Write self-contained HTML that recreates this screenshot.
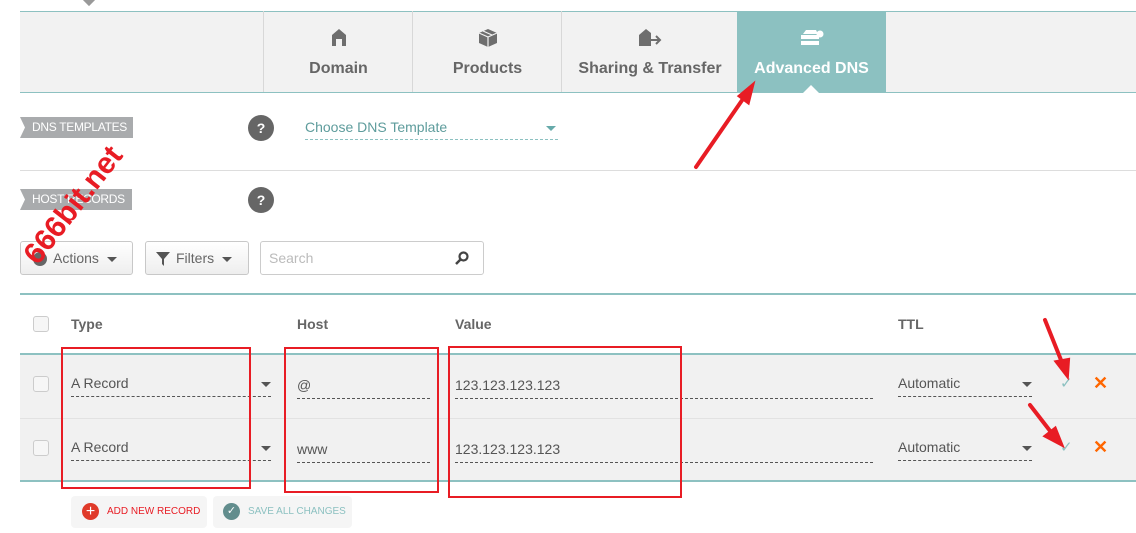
<!DOCTYPE html>
<html><head><meta charset="utf-8"><style>
*{margin:0;padding:0;box-sizing:border-box}
body{width:1136px;height:533px;overflow:hidden;background:#fff;font-family:"Liberation Sans",sans-serif;position:relative;color:#555}
.a{position:absolute}
.tabbar{left:20px;top:11px;width:1116px;height:82px;background:#f2f2f2;border-top:1px solid #8dc1c1;border-bottom:1px solid #8dc1c1}
.tab{position:absolute;top:11px;height:81px;border-left:1px solid #d8d8d8;text-align:center;font-weight:bold;font-size:16px;color:#666;white-space:nowrap}
.tab .lbl{position:absolute;top:49px;left:0;right:0}
.tab svg{position:absolute;top:17px;left:50%;transform:translateX(-50%)}
.label{background:#a9abad;color:#fff;font-size:12px;height:21px;line-height:21px;padding-left:12px;white-space:nowrap;overflow:hidden;letter-spacing:-0.3px;clip-path:polygon(0 0,100% 0,100% 100%,0 100%,5px 50%)}
.q{width:26px;height:26px;border-radius:50%;background:#666;color:#fff;font-weight:bold;font-size:14px;text-align:center;line-height:26px}
.btn{border:1px solid #c8c8c8;border-radius:3px;background:linear-gradient(#fff,#eee);height:34px;font-size:14px;color:#666;line-height:32px;white-space:nowrap}
.caret{display:inline-block;border-left:5px solid transparent;border-right:5px solid transparent;border-top:5px solid #555;vertical-align:middle}
.cb{width:16px;height:16px;border:1px solid #ccc;border-radius:3px;background:#f6f6f6}
.fld{border-bottom:1px dashed #555;font-size:14px;color:#555;height:22px;white-space:nowrap}
.th{font-size:14px;font-weight:bold;color:#666;top:316px}
.red{border:2px solid #e81c24}
</style></head><body>
<div class="a" style="left:84px;top:-6px;width:10px;height:10px;background:#999;transform:rotate(45deg)"></div>
<div class="a tabbar"></div>
<div class="tab" style="left:263px;width:150px"><svg width="16" height="18" viewBox="0 0 16 18"><path d="M1 7 8 1 15 7V18H11V11H5V18H1Z" fill="#6e6e6e"/></svg><div class="lbl">Domain</div></div>
<div class="tab" style="left:412px;width:150px"><svg width="20" height="20" viewBox="0 0 20 20"><path d="M10 1 19 5V15L10 19 1 15V5Z" fill="#6e6e6e"/><path d="M1 5 10 9 19 5M10 9V19M5 3 14 7" stroke="#f2f2f2" stroke-width="1.2" fill="none"/></svg><div class="lbl">Products</div></div>
<div class="tab" style="left:561px;width:177px"><svg width="24" height="18" viewBox="0 0 24 18"><path d="M1 7 8 1 13 5V18H1Z" fill="#6e6e6e"/><path d="M10 12H22M18 8 22 12 18 16" stroke="#6e6e6e" stroke-width="2" fill="none"/></svg><div class="lbl">Sharing &amp; Transfer</div></div>
<div class="tab" style="left:737px;width:149px;background:#8cc1c1;color:#fff;border:none"><svg width="24" height="18" viewBox="0 0 24 18"><path d="M3 6 6 2H16L18 6Z" fill="#fff"/><rect x="1" y="7" width="18" height="4" fill="#fff"/><rect x="1" y="13" width="18" height="4" fill="#fff"/><circle cx="20" cy="6" r="3.5" fill="#fff"/></svg><div class="lbl" style="color:#fff">Advanced DNS</div>
<div class="a" style="left:66px;top:74px;width:0;height:0;border-left:8px solid transparent;border-right:8px solid transparent;border-bottom:8px solid #fff"></div></div>

<div class="a label" style="left:20px;top:117px;width:113px">DNS TEMPLATES</div>
<div class="a q" style="left:248px;top:115px">?</div>
<div class="a" style="left:305px;top:119px;width:253px;height:21px;border-bottom:1px dashed #8cc1c1;font-size:14px;color:#5e9c9c">Choose DNS Template<span class="caret" style="position:absolute;right:2px;top:7px;border-top-color:#6aa"></span></div>
<div class="a" style="left:20px;top:170px;width:1116px;border-top:1px solid #ddd"></div>
<div class="a label" style="left:20px;top:189px;width:112px">HOST RECORDS</div>
<div class="a q" style="left:248px;top:187px">?</div>

<div class="a btn" style="left:20px;top:241px;width:113px;padding-left:12px"><span style="display:inline-block;width:14px;height:14px;border-radius:50%;background:#666;vertical-align:middle;margin-right:6px"></span>Actions&nbsp;&nbsp;<span class="caret"></span></div>
<div class="a btn" style="left:145px;top:241px;width:104px;padding-left:10px"><svg width="14" height="14" viewBox="0 0 14 14" style="vertical-align:middle;margin-right:6px"><path d="M0 0H14L8 7V14L6 12V7Z" fill="#555"/></svg>Filters&nbsp;&nbsp;<span class="caret"></span></div>
<div class="a" style="left:260px;top:241px;width:224px;height:34px;border:1px solid #ccc;border-radius:3px;font-size:14px;color:#bbb;line-height:32px;padding-left:8px">Search<svg width="14" height="14" viewBox="0 0 14 14" style="position:absolute;right:14px;top:9px"><circle cx="8.5" cy="5.5" r="4" stroke="#444" stroke-width="2.2" fill="none"/><path d="M6 8 1 13" stroke="#444" stroke-width="2.5"/></svg></div>
<div class="a" style="color:#e81c24;font-weight:bold;font-size:30px;transform:rotate(-52deg);transform-origin:left bottom;top:237px;left:44px;white-space:nowrap">666bit.net</div>

<div class="a" style="left:20px;top:293px;width:1116px;border-top:2px solid #8dc1c1"></div>
<div class="a cb" style="left:33px;top:316px"></div>
<div class="a th" style="left:71px">Type</div>
<div class="a th" style="left:297px">Host</div>
<div class="a th" style="left:455px">Value</div>
<div class="a th" style="left:898px">TTL</div>
<div class="a" style="left:20px;top:353px;width:1116px;height:129px;background:#f1f1f1;border-top:2px solid #8dc1c1;border-bottom:2px solid #8dc1c1"></div>
<div class="a" style="left:20px;top:418px;width:1116px;border-top:1px solid #e2e2e2"></div>

<div class="a cb" style="left:33px;top:376px"></div>
<div class="a fld" style="left:71px;top:375px;width:200px">A Record<span class="caret" style="position:absolute;right:0;top:7px"></span></div>
<div class="a fld" style="left:297px;top:377px;width:133px">@</div>
<div class="a fld" style="left:455px;top:377px;width:418px">123.123.123.123</div>
<div class="a fld" style="left:898px;top:375px;width:134px">Automatic<span class="caret" style="position:absolute;right:0;top:7px"></span></div>
<div class="a" style="left:1060px;top:374px;color:#8cc1c1;font-size:15px">✓</div>
<div class="a" style="left:1093px;top:373px;color:#f60;font-size:18px;font-weight:bold">✕</div>

<div class="a cb" style="left:33px;top:440px"></div>
<div class="a fld" style="left:71px;top:439px;width:200px">A Record<span class="caret" style="position:absolute;right:0;top:7px"></span></div>
<div class="a fld" style="left:297px;top:441px;width:133px">www</div>
<div class="a fld" style="left:455px;top:441px;width:418px">123.123.123.123</div>
<div class="a fld" style="left:898px;top:439px;width:134px">Automatic<span class="caret" style="position:absolute;right:0;top:7px"></span></div>
<div class="a" style="left:1060px;top:438px;color:#8cc1c1;font-size:15px">✓</div>
<div class="a" style="left:1093px;top:437px;color:#f60;font-size:18px;font-weight:bold">✕</div>

<div class="a red" style="left:61px;top:347px;width:190px;height:142px"></div>
<div class="a red" style="left:284px;top:347px;width:155px;height:146px"></div>
<div class="a red" style="left:448px;top:346px;width:234px;height:152px"></div>

<div class="a" style="left:71px;top:496px;width:136px;height:32px;background:#f5f5f5;border-radius:4px;font-size:10px;color:#e81c24;line-height:32px;padding-left:36px;white-space:nowrap">ADD NEW RECORD</div>
<div class="a" style="left:82px;top:503px;width:17px;height:17px;border-radius:50%;background:#e03a2a;color:#fff;text-align:center;line-height:17px;font-size:16px">+</div>
<div class="a" style="left:213px;top:496px;width:139px;height:32px;background:#f5f5f5;border-radius:4px;font-size:10px;color:#8cc1c1;line-height:32px;padding-left:35px;white-space:nowrap">SAVE ALL CHANGES</div>
<div class="a" style="left:223px;top:503px;width:17px;height:17px;border-radius:50%;background:#628d8d;color:#fff;text-align:center;line-height:17px;font-size:11px">✓</div>

<svg class="a" style="left:0;top:0" width="1136" height="533">
<g stroke="#e81c24" stroke-width="4" stroke-linecap="round" fill="#e81c24">
<line x1="696" y1="167" x2="745" y2="96"/><path d="M752 86 740 96 748 102Z"/>
<line x1="1045" y1="320" x2="1063" y2="365"/><path d="M1067 375 1057 362 1068 360Z"/>
<line x1="1030" y1="405" x2="1054" y2="436"/><path d="M1061 444 1046 436 1055 429Z"/>
</g></svg>
</body></html>
